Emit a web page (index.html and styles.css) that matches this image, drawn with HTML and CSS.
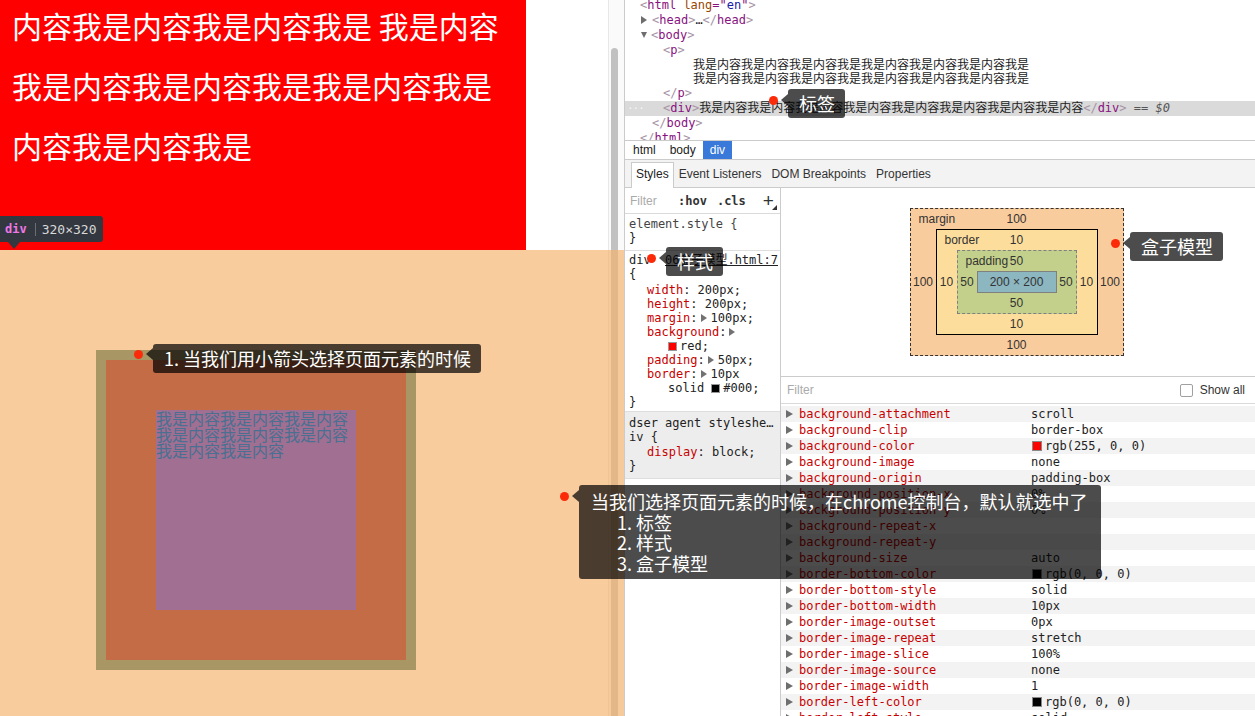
FILE: index.html
```html
<!DOCTYPE html>
<html lang="zh">
<head>
<meta charset="utf-8">
<title>box model</title>
<link rel="stylesheet" href="styles.css">
</head>
<body>
<div class="screen">
  <div class="page">
    <div class="redblock">
      <div class="redlines">
        <div>内容我是内容我是内容我是 我是内容</div>
        <div>我是内容我是内容我是我是内容我是</div>
        <div>内容我是内容我是</div>
      </div>
    </div>
    <div class="scrollbar"><div class="thumb"></div></div>
    <div class="marginarea">
      <div class="bx-border"><div class="bx-padding"><div class="bx-content">我是内容我是内容我是内容我是内容我是内容我是内容我是内容我是内容</div></div></div>
    </div>
    <div class="dimtip"><span class="dt-tag">div</span><span class="dt-sep"></span><span class="dt-size">320×320</span><span class="dt-arrow"></span></div>
  </div>

  <div class="devtools">
    <div class="elements">
      <div class="el-inner">
        <div class="row ind0"><span class="br">&lt;</span><span class="tg">html</span> <span class="an">lang</span><span class="tg">="</span><span class="av">en</span><span class="tg">"</span><span class="br">&gt;</span></div>
        <div class="row ind1"><span class="tri-r"></span><span class="br">&lt;</span><span class="tg">head</span><span class="br">&gt;</span>…<span class="br">&lt;/</span><span class="tg">head</span><span class="br">&gt;</span></div>
        <div class="row ind1"><span class="tri-d"></span><span class="br">&lt;</span><span class="tg">body</span><span class="br">&gt;</span></div>
        <div class="row ind2"><span class="br">&lt;</span><span class="tg">p</span><span class="br">&gt;</span></div>
        <div class="txt">
          <div>我是内容我是内容我是内容我是我是内容我是内容我是内容我是</div>
          <div>我是内容我是内容我是内容我是我是内容我是内容我是内容我是</div>
        </div>
        <div class="row ind2"><span class="br">&lt;/</span><span class="tg">p</span><span class="br">&gt;</span></div>
        <div class="row ind2 sel"><span class="dots">···</span><span class="br">&lt;</span><span class="tg">div</span><span class="br">&gt;</span>我是内容我是内容我是内容我是内容我是内容我是内容我是内容我是内容<span class="br">&lt;/</span><span class="tg">div</span><span class="br">&gt;</span> <span class="eq">== <i>$0</i></span></div>
        <div class="row ind1b"><span class="br">&lt;/</span><span class="tg">body</span><span class="br">&gt;</span></div>
        <div class="row ind0"><span class="br">&lt;/</span><span class="tg">html</span><span class="br">&gt;</span></div>
      </div>
    </div>
    <div class="crumbs"><span class="crumb">html</span><span class="crumb">body</span><span class="crumb on">div</span></div>
    <div class="tabs"><span class="tab on">Styles</span><span class="tab">Event Listeners</span><span class="tab">DOM Breakpoints</span><span class="tab">Properties</span></div>
    <div class="lower">
      <div class="styles">
        <div class="sfilter"><span class="sf-ph">Filter</span><span class="sf-btn hov">:hov</span><span class="sf-btn">.cls</span><span class="sf-plus">+</span><span class="sf-corner"></span></div>
        <div class="sec sec1">
          <div class="sel-line gray">element.style {</div>
          <div>}</div>
        </div>
        <div class="sec sec2">
          <div class="sel-line"><span>div</span><span class="src">06盒子模型.html:7</span></div>
          <div>{</div>
          <div class="props">
            <div class="prop"><span class="pn">width</span>: 200px;</div>
            <div class="prop"><span class="pn">height</span>: 200px;</div>
            <div class="prop"><span class="pn">margin</span>:<span class="exp"></span>100px;</div>
            <div class="prop"><span class="pn">background</span>:<span class="exp"></span></div>
            <div class="cont"><span class="sw red"></span>red;</div>
            <div class="prop"><span class="pn">padding</span>:<span class="exp"></span>50px;</div>
            <div class="prop"><span class="pn">border</span>:<span class="exp"></span>10px</div>
            <div class="cont">solid <span class="sw black"></span>#000;</div>
          </div>
          <div>}</div>
        </div>
        <div class="sec sec3">
          <div>dser agent styleshe…</div>
          <div>iv {</div>
          <div class="props ua"><div class="prop"><span class="pn">display</span>: block;</div></div>
          <div>}</div>
        </div>
      </div>
      <div class="computed">
        <div class="bm-area">
          <div class="bm bm-margin">
            <span class="bm-label">margin</span>
            <div class="bm-tb">100</div>
            <div class="bm-mid">
              <div class="bm-side ms">100</div>
              <div class="bm bm-border">
                <span class="bm-label">border</span>
                <div class="bm-tb">10</div>
                <div class="bm-mid">
                  <div class="bm-side bs">10</div>
                  <div class="bm bm-padding">
                    <span class="bm-label">padding</span>
                    <div class="bm-tb">50</div>
                    <div class="bm-mid">
                      <div class="bm-side ps">50</div>
                      <div class="bm-content">200 × 200</div>
                      <div class="bm-side ps">50</div>
                    </div>
                    <div class="bm-tb">50</div>
                  </div>
                  <div class="bm-side bs">10</div>
                </div>
                <div class="bm-tb">10</div>
              </div>
              <div class="bm-side ms">100</div>
            </div>
            <div class="bm-tb">100</div>
          </div>
        </div>
        <div class="cfilter"><span class="cf-ph">Filter</span><span class="cf-check"></span><span class="cf-label">Show all</span></div>
        <div class="crows">
          <div class="crow"><span class="ctri"></span><span class="cn">background-attachment</span><span class="cv">scroll</span></div>
          <div class="crow"><span class="ctri"></span><span class="cn">background-clip</span><span class="cv">border-box</span></div>
          <div class="crow"><span class="ctri"></span><span class="cn">background-color</span><span class="cv"><span class="csw red"></span>rgb(255, 0, 0)</span></div>
          <div class="crow"><span class="ctri"></span><span class="cn">background-image</span><span class="cv">none</span></div>
          <div class="crow"><span class="ctri"></span><span class="cn">background-origin</span><span class="cv">padding-box</span></div>
          <div class="crow"><span class="ctri"></span><span class="cn">background-position-x</span><span class="cv">0%</span></div>
          <div class="crow"><span class="ctri"></span><span class="cn">background-position-y</span><span class="cv">0%</span></div>
          <div class="crow"><span class="ctri"></span><span class="cn">background-repeat-x</span><span class="cv"></span></div>
          <div class="crow"><span class="ctri"></span><span class="cn">background-repeat-y</span><span class="cv"></span></div>
          <div class="crow"><span class="ctri"></span><span class="cn">background-size</span><span class="cv">auto</span></div>
          <div class="crow"><span class="ctri"></span><span class="cn">border-bottom-color</span><span class="cv"><span class="csw black"></span>rgb(0, 0, 0)</span></div>
          <div class="crow"><span class="ctri"></span><span class="cn">border-bottom-style</span><span class="cv">solid</span></div>
          <div class="crow"><span class="ctri"></span><span class="cn">border-bottom-width</span><span class="cv">10px</span></div>
          <div class="crow"><span class="ctri"></span><span class="cn">border-image-outset</span><span class="cv">0px</span></div>
          <div class="crow"><span class="ctri"></span><span class="cn">border-image-repeat</span><span class="cv">stretch</span></div>
          <div class="crow"><span class="ctri"></span><span class="cn">border-image-slice</span><span class="cv">100%</span></div>
          <div class="crow"><span class="ctri"></span><span class="cn">border-image-source</span><span class="cv">none</span></div>
          <div class="crow"><span class="ctri"></span><span class="cn">border-image-width</span><span class="cv">1</span></div>
          <div class="crow"><span class="ctri"></span><span class="cn">border-left-color</span><span class="cv"><span class="csw black"></span>rgb(0, 0, 0)</span></div>
          <div class="crow"><span class="ctri"></span><span class="cn">border-left-style</span><span class="cv">solid</span></div>
        </div>
      </div>
    </div>
  </div>

  <span class="dot dot-a"></span><span class="arw arw-a"></span>
  <div class="ann ann-a">1. 当我们用小箭头选择页面元素的时候</div>
  <span class="dot dot-tag"></span><span class="arw arw-tag"></span>
  <div class="ann ann-tag">标签</div>
  <span class="dot dot-style"></span><span class="arw arw-style"></span>
  <div class="ann ann-style">样式</div>
  <span class="dot dot-box"></span><span class="arw arw-box"></span>
  <div class="ann ann-box">盒子模型</div>
  <span class="dot dot-big"></span><span class="arw arw-big"></span>
  <div class="ann ann-big">
    <div>当我们选择页面元素的时候，在chrome控制台，默认就选中了</div>
    <div class="sub">1. 标签</div>
    <div class="sub">2. 样式</div>
    <div class="sub">3. 盒子模型</div>
  </div>
</div>
</body>
</html>
```
FILE: styles.css
```css
html, body { margin: 0; padding: 0; }
body { width: 1255px; height: 716px; overflow: hidden; background: #fff; }

.screen {
  position: relative;
  width: 1255px;
  height: 716px;
  display: flex;
  overflow: hidden;
  font-family: "Liberation Sans", Arial, sans-serif;
}

/* ---------- page (left) ---------- */
.page {
  position: relative;
  width: 624px;
  flex: none;
  background: #fff;
  overflow: hidden;
}
.redblock {
  width: 526px;
  height: 250px;
  background: #ff0000;
  color: #fff;
  font: 30px/60px "Noto Sans CJK SC", sans-serif;
  padding-left: 12px;
  box-sizing: border-box;
  overflow: hidden;
  white-space: nowrap;
}
.redlines { margin-top: -5px; }

.scrollbar {
  position: absolute;
  top: 0; right: 0; bottom: 0;
  width: 16px;
  box-sizing: border-box;
  border-left: 1px solid #e8e8e8;
  background: #fafafa;
  z-index: 0;
}
.thumb {
  position: absolute;
  left: 2px;
  width: 7px;
  top: 48px;
  bottom: -10px;
  border-radius: 4px;
  background: #c1c1c1;
}

.marginarea {
  position: relative;
  z-index: 1;
  height: 466px;
  box-sizing: border-box;
  padding: 100px 0 0 96px;
  background: rgba(246, 178, 107, 0.66);
}
.bx-border {
  width: 320px;
  height: 320px;
  box-sizing: border-box;
  padding: 10px;
  background: #a89765;
}
.bx-padding { padding: 50px; background: #c46c45; }
.bx-content {
  width: 200px;
  height: 200px;
  background: #a06f91;
  color: #496f91;
  font: 16px/16px "Noto Sans CJK SC", sans-serif;
  overflow: hidden;
}

.dimtip {
  position: absolute;
  z-index: 2;
  left: 0;
  top: 216px;
  height: 26px;
  display: flex;
  align-items: center;
  background: #333740;
  border-radius: 0 3px 3px 0;
  padding: 0 7px 0 5px;
  font-family: "DejaVu Sans Mono", monospace;
}
.dt-tag { color: #ee78e6; font-weight: bold; font-size: 12px; }
.dt-sep { width: 1px; height: 13px; background: #6b6e75; margin: 0 6px 0 8px; }
.dt-size { color: #d9d9d9; font-size: 13px; }
.dt-arrow {
  position: absolute;
  left: 8px;
  top: 26px;
  width: 0; height: 0;
  border-top: 7px solid #333740;
  border-left: 6px solid transparent;
  border-right: 6px solid transparent;
}

/* ---------- devtools ---------- */
.devtools {
  flex: 1;
  min-width: 0;
  border-left: 1px solid #cbcbcb;
  display: flex;
  flex-direction: column;
  background: #fff;
}
.elements, .styles, .crows {
  font-family: "DejaVu Sans Mono", "Noto Sans CJK SC", monospace;
}
.elements {
  height: 140px;
  flex: none;
  overflow: hidden;
  font-size: 12px;
  color: #222;
  position: relative;
}
.el-inner { margin-top: -2px; }
.row {
  height: 15px;
  line-height: 15px;
  white-space: nowrap;
  position: relative;
}
.ind0 { padding-left: 15px; }
.ind1 { padding-left: 16px; }
.ind1b { padding-left: 27px; }
.ind2 { padding-left: 38px; }
.txt { padding-left: 68px; line-height: 14px; white-space: nowrap; }
.sel { background: #dadada; }
.dots {
  position: absolute;
  left: 2px;
  top: 0;
  color: #f4f4f4;
  font-size: 11px;
  letter-spacing: -1px;
}
.br { color: #a894a6; }
.tg { color: #881280; }
.an { color: #994500; }
.av { color: #1a1aa6; }
.eq { color: #555; }
.eq i { font-style: italic; }
.tri-r, .tri-d {
  display: inline-block;
  width: 0; height: 0;
  margin-right: 5px;
  vertical-align: 0;
}
.tri-r {
  border-left: 6px solid #6e6e6e;
  border-top: 4px solid transparent;
  border-bottom: 4px solid transparent;
}
.tri-d {
  border-top: 6px solid #6e6e6e;
  border-left: 3.5px solid transparent;
  border-right: 3.5px solid transparent;
  margin-right: 4px;
  vertical-align: 1px;
}

.crumbs {
  flex: none;
  height: 18px;
  border-top: 1px solid #cbcbcb;
  border-bottom: 1px solid #cbcbcb;
  display: flex;
  padding-left: 1px;
  font-size: 12px;
  line-height: 18px;
  color: #222;
}
.crumb { padding: 0 7px; }
.crumb.on { background: #3879d9; color: #fff; }

.tabs {
  flex: none;
  height: 27px;
  border-bottom: 1px solid #cbcbcb;
  background: #f3f3f3;
  display: flex;
  align-items: flex-end;
  padding-left: 6px;
  font-size: 12px;
}
.tab {
  height: 24px;
  line-height: 23px;
  padding: 0 4px;
  border: 1px solid transparent;
  border-bottom: none;
  color: #333;
  white-space: nowrap;
}
.tab.on {
  background: #fff;
  border-color: #cbcbcb;
  margin-bottom: -1px;
  height: 25px;
  color: #222;
}

.lower { flex: 1; display: flex; min-height: 0; }

/* styles pane */
.styles {
  width: 155px;
  flex: none;
  border-right: 1px solid #cbcbcb;
  font-size: 12px;
  line-height: 14px;
  color: #222;
  position: relative;
  white-space: nowrap;
  overflow: hidden;
}
.sfilter {
  height: 25px;
  border-bottom: 1px solid #dadada;
  display: flex;
  align-items: center;
  padding-left: 5px;
  position: relative;
}
.sf-ph {
  width: 48px;
  font-family: "Liberation Sans", Arial, sans-serif;
  color: #aaa;
}
.sf-btn { font-weight: bold; color: #333; }
.hov { margin-right: 10px; }
.sf-plus {
  margin-left: 17px;
  font-family: "Liberation Sans", Arial, sans-serif;
  font-size: 19px;
  color: #333;
}
.sf-corner {
  position: absolute;
  left: 147px;
  top: 17px;
  width: 0; height: 0;
  border-left: 5px solid transparent;
  border-bottom: 5px solid #333;
}
.sec { padding-left: 4px; padding-right: 2px; border-bottom: 1px solid #dedede; }
.sec1 { padding-top: 3px; padding-bottom: 5px; }
.sec2 { padding-top: 2px; padding-bottom: 2px; }
.sec3 { padding-top: 4px; padding-bottom: 5px; background: #ededed; }
.gray { color: #444; }
.sel-line { display: flex; justify-content: space-between; }
.src { text-decoration: underline; color: #222; }
.props { margin-top: 2px; }
.props.ua { margin-top: 1px; }
.prop { padding-left: 18px; }
.cont { padding-left: 39px; }
.pn { color: #c80000; }
.exp {
  display: inline-block;
  width: 0; height: 0;
  margin: 0 4px 0 3px;
  border-left: 6px solid #727272;
  border-top: 4px solid transparent;
  border-bottom: 4px solid transparent;
  vertical-align: 0;
}
.sw {
  display: inline-block;
  width: 9px; height: 9px;
  margin-right: 3px;
  vertical-align: -1px;
  border: 1px solid #999;
  box-sizing: border-box;
}
.sw.red, .csw.red { background: #f00; }
.sw.black, .csw.black { background: #000; }

/* computed pane */
.computed {
  flex: 1;
  min-width: 0;
  display: flex;
  flex-direction: column;
  overflow: hidden;
}
.bm-area {
  flex: none;
  height: 189px;
  box-sizing: border-box;
  border-bottom: 1px solid #cbcbcb;
  padding: 20px 3px 0 0;
  text-align: center;
  font-size: 12px;
  color: #333;
}
.bm {
  display: inline-flex;
  flex-direction: column;
  position: relative;
  vertical-align: top;
  text-align: center;
}
.bm-margin { border: 1px dashed #333; background: #f9cc9d; }
.bm-border { border: 1px solid #000; background: #fddd9b; }
.bm-padding { border: 1px dashed #808080; background: #c3d08b; }
.bm-content {
  width: 78px;
  height: 20px;
  line-height: 20px;
  border: 1px solid #808080;
  background: #8cb6c0;
}
.bm-tb { height: 20px; line-height: 20px; }
.bm-mid { display: flex; align-items: center; }
.bm-side { line-height: 20px; }
.ms { width: 25px; }
.bs { width: 20px; }
.ps { width: 19px; }
.bm-label {
  position: absolute;
  left: 8px;
  top: 0;
  line-height: 20px;
}

.cfilter {
  flex: none;
  height: 26px;
  border-bottom: 1px solid #dadada;
  display: flex;
  align-items: center;
  padding: 0 10px 0 6px;
  font-size: 12px;
}
.cf-ph { flex: 1; color: #aaa; }
.cf-check {
  width: 11px; height: 11px;
  border: 1px solid #a0a0a0;
  border-radius: 2px;
  background: #fff;
  margin-right: 7px;
}
.cf-label { color: #333; }

.crows { padding-top: 2px; font-size: 12px; }
.crow {
  height: 16px;
  line-height: 16px;
  display: flex;
  align-items: center;
  padding-left: 5px;
  white-space: nowrap;
}
.crow:nth-child(odd) { background: #f3f3f3; }
.ctri {
  width: 0; height: 0;
  margin-right: 6px;
  border-left: 7px solid #6e6e6e;
  border-top: 4px solid transparent;
  border-bottom: 4px solid transparent;
}
.cn { width: 232px; color: #c80000; flex: none; }
.cv { color: #222; display: flex; align-items: center; }
.csw {
  display: inline-block;
  width: 10px; height: 10px;
  margin: 0 3px 0 1px;
  border: 1px solid #888;
  box-sizing: border-box;
}

/* ---------- annotations ---------- */
.ann {
  position: absolute;
  z-index: 10;
  background: rgba(0, 0, 0, 0.7);
  color: #fff;
  font: 18px/20px "Noto Sans CJK SC", sans-serif;
  border-radius: 3px;
  white-space: nowrap;
  padding: 4px 10px 5px 11px;
}
.dot {
  position: absolute;
  z-index: 10;
  width: 9px;
  height: 9px;
  border-radius: 50%;
  background: #fb2b0a;
}
.arw {
  position: absolute;
  z-index: 10;
  width: 0; height: 0;
  border-right: 7px solid rgba(0, 0, 0, 0.7);
  border-top: 6px solid transparent;
  border-bottom: 6px solid transparent;
}
.ann-a { left: 153px; top: 344px; }
.dot-a { left: 134px; top: 350px; }
.arw-a { left: 146px; top: 348px; }

.ann-tag { left: 788px; top: 89px; }
.dot-tag { left: 769px; top: 96px; }
.arw-tag { left: 781px; top: 94px; }

.ann-style { left: 666px; top: 247px; }
.dot-style { left: 647px; top: 254px; }
.arw-style { left: 659px; top: 252px; }

.ann-box { left: 1130px; top: 232px; }
.dot-box { left: 1111px; top: 239px; }
.arw-box { left: 1123px; top: 237px; }

.ann-big {
  left: 579px;
  top: 485px;
  width: 522px;
  box-sizing: border-box;
  padding: 6px 12px 6px 12px;
  line-height: 20.5px;
}
.ann-big .sub { padding-left: 26px; }
.dot-big { left: 560px; top: 492px; }
.arw-big { left: 572px; top: 490px; }
```
